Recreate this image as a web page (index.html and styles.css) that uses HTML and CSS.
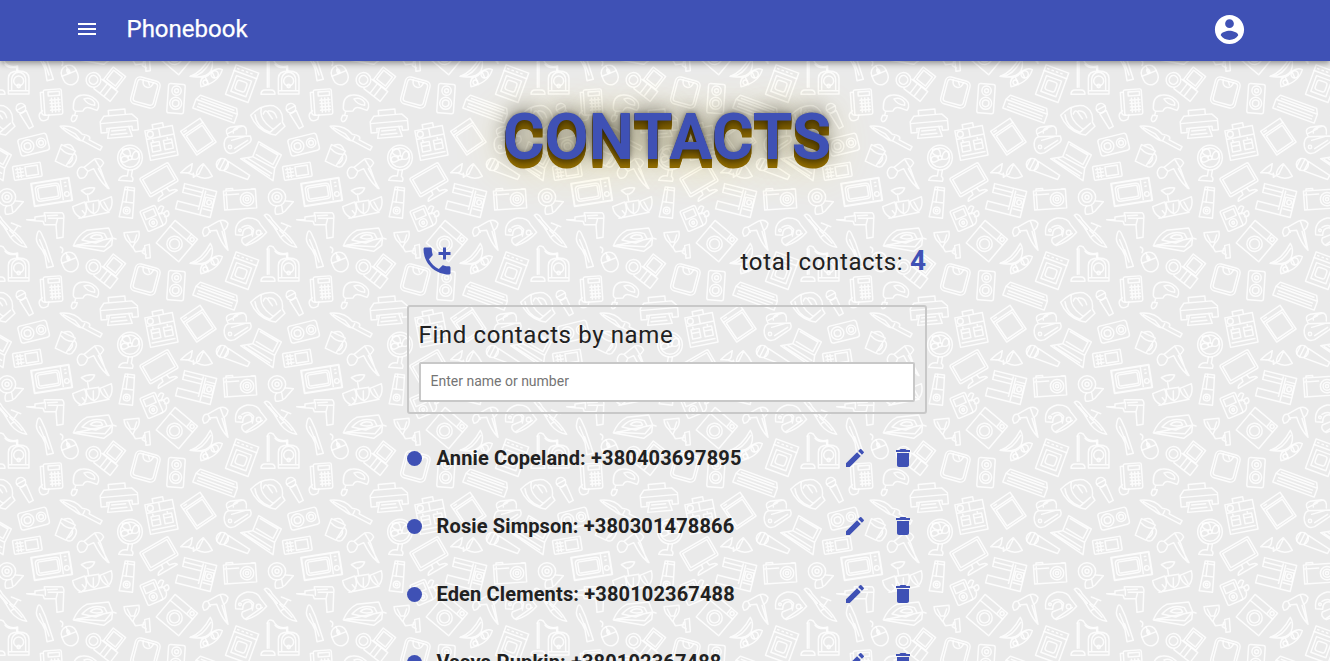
FILE: index.html
```html
<!DOCTYPE html>
<html lang="en">
<head>
<meta charset="utf-8">
<title>Phonebook</title>
<link rel="stylesheet" href="styles.css">
</head>
<body>
<svg class="backdrop" aria-hidden="true">
  <defs>
    <g id="doodles" transform="scale(.33333)">
      <!-- upper rows -->
      <g>
        <path d="M802 185V262M807 185V262M783 283q0-13 12-13h18q12 0 12 13z"/>
        <path d="M835 282V235q0-22 31-22t31 22v47zM845 270V238a21 21 0 0 1 42 0v32M825 192q10 14 35 10v10M837 272h58"/>
        <circle cx="866" cy="243" r="15"/><circle cx="866" cy="258" r="5"/>
        <g transform="rotate(20 726 252)"><rect x="690" y="204" width="72" height="94"/><path d="M690 222h72M698 213h4m10 0h4m10 0h4m10 0h4"/><rect x="702" y="234" width="48" height="50"/><rect x="710" y="244" width="31" height="30" rx="7"/></g>
        <g transform="rotate(15 436 278)"><rect x="398" y="236" width="76" height="83" rx="14"/><rect x="405" y="243" width="62" height="68" rx="9"/><path d="M420 243q2 18 16 18t16-18M436 243l6 10"/></g>
        <g transform="rotate(4 528 296)"><rect x="503" y="252" width="50" height="88" rx="6"/><circle cx="528" cy="272" r="14"/><circle cx="528" cy="272" r="6"/><circle cx="528" cy="310" r="18"/><circle cx="528" cy="310" r="10"/></g>
        <g transform="rotate(20 648 326)"><path d="M590 304h116l8 16v28H582v-28zM582 320h132M596 312h104M594 330h108M594 339h108"/></g>
        <g transform="rotate(-4 160 305)"><rect x="132" y="268" width="54" height="76" rx="5"/><rect x="146" y="275" width="34" height="12"/><path d="M132 275h-9v60q0 9 12 9M126 330q-16 8-10 22t24 4l4-12M150 300h30M150 310h30M150 320h30M150 330h30M155 294v42M165 294v42M175 294v42"/></g>
        <g transform="rotate(-28 72 342)"><circle cx="72" cy="322" r="14"/><path d="M58 322h28M61 336l4 52h14l4-52z"/></g>
        <path d="M220 322q-1-35 28-37 28-3 46 22 5 14-3 24l-20-7q-16-6-22 9l-22 1q-8-4-7-12zM252 297q20-7 32 11v8q-22-2-32-19M227 334l-3 12M218 346q-8 16 0 19 10 0 14-18z"/>
        <g transform="rotate(-5 357 368)"><path d="M328 345v-16h50v16M313 345h84l16 16v33h-18v-12h-76v12h-18v-33zM301 366h112M327 382l-8 30h74l-8-30M333 391h42M330 402h48"/></g>
        <g transform="rotate(28 243 412)"><path d="M172 412q35-24 70-10 28-10 26 5h44v12h-60q-12 5-30 1-34-2-50-8zM183 411h40l20 8M252 405v15"/></g>
        <g transform="rotate(-14 101 434)"><rect x="57" y="408" width="88" height="52" rx="8"/><circle cx="82" cy="434" r="19"/><circle cx="82" cy="434" r="10"/><circle cx="124" cy="434" r="14"/><circle cx="124" cy="434" r="7"/></g>
        <g transform="rotate(-11 483 422)"><path d="M441 384h84v90h-84zM466 384v-14h32v14M441 410h84M448 462h70M483 384v26"/><circle cx="455" cy="397" r="9"/><path d="M452 423h25v28h-25zM490 423h25v28h-25zM459 416v7M503 416v7M452 434h25M490 434h25"/></g>
        <g transform="rotate(-34 595 410)"><rect x="560" y="367" width="70" height="86"/><path d="M560 382h70M567 374h9"/><rect x="566" y="388" width="58" height="58"/></g>
        <path d="M673 440q-3-26 13-30l65-2q8 18-10 25l-37 25q-25 9-31-18zM685 410q-14-22 5-28l34-5q18 0 15 25M700 399q-2-13 12-16l14-4M704 446l39-25M685 400l28-14M695 421l39-11"/><circle cx="690" cy="441" r="5"/>
        <path d="M752 346q32-34 68-29 32 13 27 49l8 13-28 26q-54-8-75-59zM765 344q4 38 45 53l31-27M784 326q-8 32 36 62M790 342q5-17 15-3l12 17M805 333q20-3 25 20"/>
        <path d="M776 425l68 40-20 40-66-35zM781 434l53 31-15 29-50-30M722 476l36-6 66 35-5 37zM733 479l76 49M745 476l70 44"/>
        <g transform="rotate(-63 700 510)"><circle cx="700" cy="473" r="18"/><path d="M682 473h36M686 461h28M685 486l9 75h14l8-75z"/></g>
        <path d="M542 518q16-16 35-27l-4 20q-3 10-18 7zM559 518l23 7M580 520v12l15-10M589 527q-1-20 21-36 18 19 27 38-24 12-48-2zM610 495l-14 28"/>
        <g transform="rotate(-30 475 538)"><rect x="427" y="508" width="98" height="64" rx="5"/><rect x="434" y="515" width="84" height="49"/><path d="M466 573l-2 12q-20 1-22 10h66q-3-9-22-10l-2-12"/></g>
        <circle cx="390" cy="473" r="37"/><circle cx="390" cy="473" r="29"/><circle cx="390" cy="473" r="6"/><path d="M385 469q-23-5-17-21 25-8 23 20M396 471q5-23 20-15 5 27-20 21M387 479q-18 15-24 1 2-17 21-8M385 510l-3 18q-20-3-26 13l41 3q5-10-3-15l3-18"/>
        <path d="M233 512q5-15 19-10l32-25q20-5 27 12-6 12-16 17l32 60q-23-14-46-60l-18 8q-5 24-24 20-10-10-6-22zM252 502l12 12M284 477l17 28M302 508l20 56"/>
        <g transform="rotate(25 194 468)"><path d="M171 441h46l-7 53h-35zM176 453q18 9 37 0M179 439q16-16 32 0M216 448q21 6 11 38-6 10-16 6M215 459q8 8 0 24"/></g>
        <g transform="rotate(-9 82 514)"><rect x="40" y="493" width="84" height="42" rx="3"/><rect x="77" y="500" width="37" height="28"/><path d="M48 504h22M48 514h22M48 525h22M53 499v30M62 499v30"/></g>
        <g transform="rotate(-9 155 576)"><rect x="98" y="542" width="114" height="68" stroke-width="6"/><rect x="108" y="552" width="72" height="46" rx="10"/><rect x="115" y="558" width="59" height="34" rx="5"/><path d="M186 547v57M197 554h4M197 565h4"/><circle cx="199" cy="589" r="7"/></g>
        <circle cx="831" cy="592" r="26"/><circle cx="831" cy="592" r="15"/><circle cx="831" cy="592" r="6"/><path d="M830 618q-8 8-3 24 15 4 28-8l25-29q-13-2-23-2M845 617l3 18"/>
        <g transform="rotate(-4 720 596)"><path d="M672 570h96v57h-96zM680 570v-6h20v6M672 582h45M680 575v50M755 569h10"/><circle cx="741" cy="599" r="20"/><circle cx="741" cy="599" r="12"/><circle cx="741" cy="599" r="5"/></g>
        <g transform="rotate(14 590 600)"><path d="M543 561h99v80h-107v-24h67v-29h-58zM602 566v60M543 574h58M610 568v70"/><rect x="615" y="585" width="25" height="27"/><circle cx="628" cy="598" r="7"/><path d="M616 577h24M615 621h24"/></g>
        <g transform="rotate(7 384 608)"><path d="M370 562h28l3 45h-34zM367 607l-4 46h40l-2-46"/><circle cx="383" cy="632" r="10"/><circle cx="383" cy="632" r="4"/><path d="M378 562v45M370 570h28"/></g>
        <path d="M244 572q18-12 40-8-6 19-25 19zM262 582l4 22M218 620l36-14q14 34-10 48-23-10-26-34zM258 607l38-6q7 31-14 40-21-8-24-34zM300 604l34-14q7 30-9 45-21-9-25-31zM237 655l90-18M247 632l10 12M280 612v26M312 606l12 22"/>
      </g>
      <!-- lower rows -->
      <g transform="translate(0 600)">
        <path d="M110 110q5-28 14-10 14 28 20 50l16 49-19 4-6-36q-5-14-19-31-9-14-6-26M119 119l18 43M134 149l13 37"/>
        <path d="M80 59h25v-8l28-4V38h53q8 5 5 21l-2 53-18 3-3-41h-35l-4-10-24-2zM142 47l30-1M145 55h28M168 75l5-20h15M136 46v18"/>
        <path d="M220 137q14-33 40-46l66-7 12 30 10 3M338 114l-3 22-24 18-91-16zM230 136l85 4 19-22M246 120q27-32 67-19l8 15-34 13zM271 113q10-13 32-7l5 8q-20 6-37-1z"/>
        <path d="M181 141q12 4 5 17"/><g transform="rotate(-22 209 185)"><rect x="186" y="156" width="46" height="60" rx="23"/><path d="M186 181h46M209 157v24"/><ellipse cx="209" cy="174" rx="4" ry="7"/></g>
        <g transform="rotate(38 315 215)"><circle cx="279" cy="225" r="22"/><circle cx="279" cy="225" r="13"/><path d="M298 208h60v37h-62M319 210v35M334 210v35"/><rect x="302" y="158" width="47" height="48"/><rect x="309" y="165" width="33" height="34"/></g>
        <path d="M372 98l45-4q4 23-13 36l-6 13-10-14q-15-13-16-31zM382 105l10 21h11l7-21M399 142l7 13 25-3M434 137l14-4 3 40-13 2zM431 145l-4 13 12 7"/>
        <g transform="rotate(-23 455 55)"><rect x="430" y="22" width="49" height="66" rx="5"/><rect x="438" y="30" width="33" height="22"/><circle cx="454" cy="69" r="12"/><circle cx="454" cy="69" r="4"/></g><path d="M482 79q21-6 17-25-10-24-23-12M475 28q5-15 16-7l-8 21M490 42q14-20 17 0-2 9-13 8"/>
        <g transform="rotate(40 530 124)"><rect x="486" y="79" width="88" height="88"/><path d="M486 102h88M550 79v23"/><circle cx="530" cy="134" r="23"/><circle cx="530" cy="134" r="15"/><circle cx="562" cy="90" r="6"/></g>
        <path d="M570 190q36-12 61-60 12 18 2 44-15 24-63 16zM580 189q27-2 52-44M603 221q-7-28 20-33 25-29 44-18-12 40-64 51zM615 190l11 25M636 176l8 18"/><circle cx="616" cy="208" r="7"/><circle cx="644" cy="184" r="11"/>
        <path d="M608 98q2-18 14-16l32-18q20-9 30 6-2 15-12 20l12 61q-22-23-34-60l-21 2q-5 15-17 16zM624 82l7 15M661 63l10 28M666 94l15 50"/>
      </g>
      <g transform="translate(600 600)">
        <path d="M107 104q-5-40 34-50 32-2 40 19l19 24q-24 28-61 40-19-10-12-23l27-11q7-14-7-20-19 0-19 23zM126 82q20-14 35 6l-4 20M139 133l48-33"/><circle cx="176" cy="98" r="7"/><circle cx="120" cy="91" r="4"/>
        <path d="M193 46q12-10 24 14l25 28q28 18 48 54-28-4-48-29l-21-34zM207 59l25 29M239 91l37 39M242 113q5-9 13-7M244 69l28 11M262 80l-12 18"/>
        <path d="M202 148q3-16 18-7 14 26 43 18v14"/>
      </g>
    </g>
    <pattern id="wallpaper" width="270" height="187" patternUnits="userSpaceOnUse">
      <use href="#doodles"/><use href="#doodles" x="-270"/>
      <use href="#doodles" y="-187"/><use href="#doodles" x="-270" y="-187"/>
    </pattern>
  </defs>
  <rect width="100%" height="100%" fill="url(#wallpaper)" stroke="none"/>
</svg>

<header class="topbar">
  <svg class="icon menu" viewBox="0 0 24 24"><path d="M3 18h18v-2H3v2zm0-5h18v-2H3v2zm0-7v2h18V6H3z"/></svg>
  <span class="brand">Phonebook</span>
  <svg class="icon account" viewBox="0 0 24 24"><path d="M12 2C6.48 2 2 6.48 2 12s4.48 10 10 10 10-4.48 10-10S17.52 2 12 2zm0 3c1.66 0 3 1.34 3 3s-1.34 3-3 3-3-1.34-3-3 1.34-3 3-3zm0 14.2c-2.5 0-4.71-1.28-6-3.22.03-1.99 4-3.08 6-3.08 1.99 0 5.97 1.09 6 3.08-1.29 1.94-3.5 3.22-6 3.22z"/></svg>
</header>

<main class="page">
  <h1 class="title">CONTACTS</h1>
  <div class="summary">
    <svg class="icon add" viewBox="0 0 24 24"><path d="M20 15.5c-1.25 0-2.45-.2-3.57-.57-.35-.11-.74-.03-1.02.24l-2.2 2.2c-2.83-1.44-5.15-3.75-6.59-6.59l2.2-2.21c.28-.26.36-.65.25-1C8.7 6.45 8.5 5.25 8.5 4c0-.55-.45-1-1-1H4c-.55 0-1 .45-1 1 0 9.39 7.61 17 17 17 .55 0 1-.45 1-1v-3.5c0-.55-.45-1-1-1zM21 6h-3V3h-2v3h-3v2h3v3h2V8h3V6z"/></svg>
    <p class="total">total contacts: <b class="count">4</b></p>
  </div>
  <label class="filter">
    <span class="filter-label">Find contacts by name</span>
    <input class="filter-input" type="text" placeholder="Enter name or number">
  </label>
  <ul class="contacts">
    <li class="contact"><span class="dot"></span><span class="name">Annie Copeland: +380403697895</span><svg class="icon action" viewBox="0 0 24 24"><use href="#edit"/></svg><svg class="icon action" viewBox="0 0 24 24"><use href="#delete"/></svg></li>
    <li class="contact"><span class="dot"></span><span class="name">Rosie Simpson: +380301478866</span><svg class="icon action" viewBox="0 0 24 24"><use href="#edit"/></svg><svg class="icon action" viewBox="0 0 24 24"><use href="#delete"/></svg></li>
    <li class="contact"><span class="dot"></span><span class="name">Eden Clements: +380102367488</span><svg class="icon action" viewBox="0 0 24 24"><use href="#edit"/></svg><svg class="icon action" viewBox="0 0 24 24"><use href="#delete"/></svg></li>
    <li class="contact"><span class="dot"></span><span class="name">Vasya Pupkin: +380102367488</span><svg class="icon action" viewBox="0 0 24 24"><use href="#edit"/></svg><svg class="icon action" viewBox="0 0 24 24"><use href="#delete"/></svg></li>
  </ul>
</main>

<svg class="sprite" width="0" height="0">
  <defs>
    <path id="edit" d="M3 17.25V21h3.75L17.81 9.94l-3.75-3.75L3 17.25zM20.71 7.04c.39-.39.39-1.02 0-1.41l-2.34-2.34a.9959.9959 0 0 0-1.41 0l-1.83 1.83 3.75 3.75 1.83-1.83z"/>
    <path id="delete" d="M6 19c0 1.1.9 2 2 2h8c1.1 0 2-.9 2-2V7H6v12zM19 4h-3.5l-1-1h-5l-1 1H5v2h14V4z"/>
  </defs>
</svg>
</body>
</html>
```

FILE: styles.css
```css
* { box-sizing: border-box; }

html { height: 100%; overflow: hidden; }

body {
  margin: 0;
  height: 100%;
  overflow: hidden;
  background: #eaeaea;
  color: #212121;
  font-family: Roboto, "Liberation Sans", sans-serif;
}

.backdrop {
  position: absolute;
  inset: 0;
  z-index: -1;
  width: 100%;
  height: 100%;
  fill: none;
  stroke: rgba(255, 255, 255, .88);
  stroke-width: 4.4;
  stroke-linejoin: round;
  stroke-linecap: round;
}

.icon { display: block; flex: none; fill: #3f51b5; }

.sprite { display: block; }

.topbar {
  display: flex;
  align-items: center;
  height: 61px;
  padding: 0 83px 4px 75px;
  background: #3f51b5;
  color: #fff;
  box-shadow: 0 2px 4px -1px rgba(0, 0, 0, .2), 0 4px 5px rgba(0, 0, 0, .14), 0 1px 10px rgba(0, 0, 0, .12);
}

.topbar .icon { fill: #fff; }

.menu { width: 24px; height: 24px; }

.brand { margin-left: 27.5px; font-size: 24px; line-height: 32px; -webkit-text-stroke: .25px #fff; }

.account { width: 35px; height: 35px; margin: 2px 0 0 auto; }

.page { width: 520px; margin: 0 auto; position: relative; left: 2px; }

.title {
  margin: 39px 0 0;
  font-size: 64px;
  line-height: 76px;
  font-weight: 700;
  text-align: center;
  color: #3f51b5;
  text-shadow:
    0 0 5px rgba(0, 0, 0, .4),
    0 -2px 20px rgba(0, 0, 0, .6),
    0 1px #806000, 0 2px #806000, 0 3px #806000, 0 4px #846300, 0 5px #886600,
    0 6px #8c6900, 0 7px #906c00, 0 8px #946f00, 0 9px #946f00,
    0 5px 50px rgba(255, 215, 0, .45);
}

.summary {
  display: flex;
  justify-content: space-between;
  align-items: center;
  height: 40px;
  margin-top: 65px;
  padding: 0 1px 1px 12px;
}

.add { width: 36px; height: 36px; }

.total { margin: -1px 0 0; font-size: 24px; letter-spacing: .65px; }

.count { font-size: 28px; font-weight: 700; color: #3f51b5; letter-spacing: 0; }

.filter {
  display: block;
  height: 109px;
  margin-top: 24px;
  padding: 12px 10px 10px;
  border: 2px solid #c8c8c8;
  border-radius: 3px;
}

.filter-label { display: block; margin-left: -.5px; font-size: 24px; line-height: 32px; letter-spacing: .62px; }

.filter-input {
  display: block;
  width: 100%;
  height: 40px;
  margin-top: 11px;
  padding: 0 9.5px 2px;
  border: 2px solid #c8c8c8;
  border-radius: 2px;
  background: #fff;
  font: 14px Roboto, sans-serif;
}

.filter-input::placeholder { color: #757575; }

.contacts {
  display: flex;
  flex-direction: column;
  gap: 20px;
  margin: 20px 0 0;
  padding: 0;
  list-style: none;
}

.contact { display: flex; align-items: center; height: 48px; padding-right: 12px; }

.dot { width: 15px; height: 15px; border-radius: 50%; background: #3f51b5; }

.name { flex: 1; margin-left: 14.5px; font-size: 20px; font-weight: 700; letter-spacing: .15px; }

.action { width: 24px; height: 24px; }

.action + .action { margin-left: 24px; }
```
